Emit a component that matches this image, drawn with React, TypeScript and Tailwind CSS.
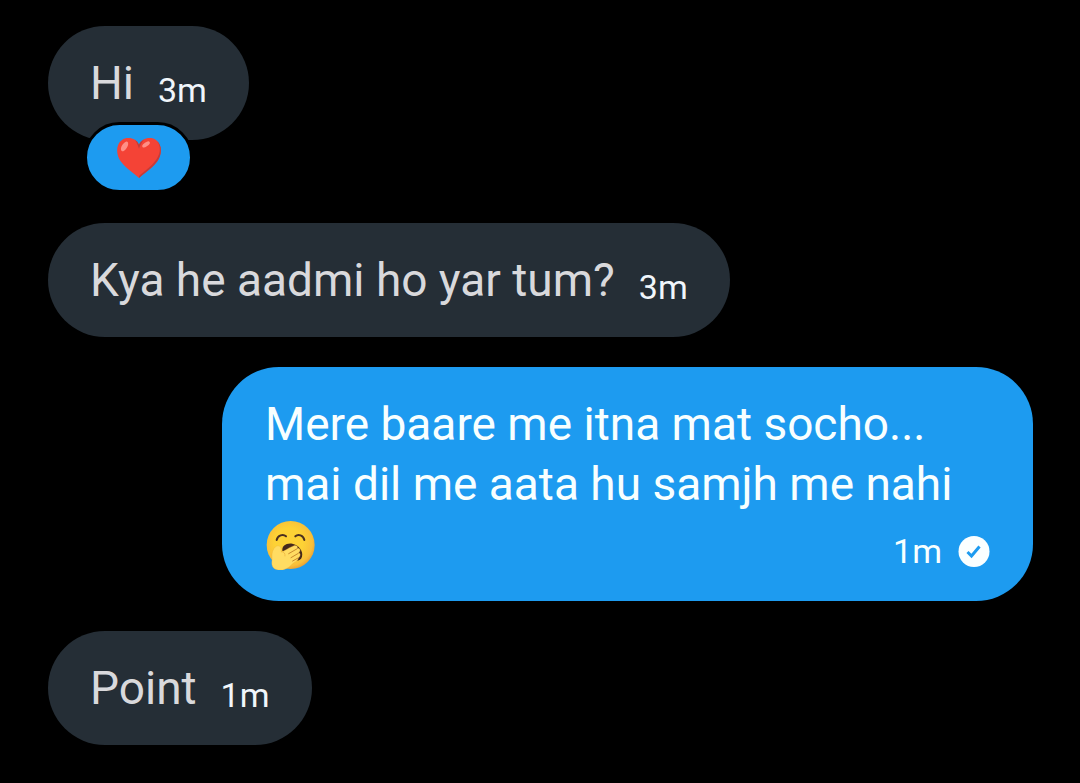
import React from "react";

interface Message {
  id: number;
  text: string;
  time: string;
  mine?: boolean;
  liked?: boolean;
}

const messages: Message[] = [
  { id: 1, text: "Hi", time: "3m", liked: true },
  { id: 2, text: "Kya he aadmi ho yar tum?", time: "3m" },
  {
    id: 3,
    text: "Mere baare me itna mat socho...\nmai dil me aata hu samjh me nahi",
    time: "1m",
    mine: true,
  },
  { id: 4, text: "Point", time: "1m" },
];

const HeartIcon = () => (
  <svg viewBox="50 38 130 119" className="h-[40px] w-[44px]" aria-hidden="true">
    <path
      d="M115 157C103 145 78 131 61 108C50 93 47 73 53 59C58 46 69 38 83 38C98 38 110 45 115 58C120 45 132 38 147 38C161 38 172 46 177 59C183 73 180 93 169 108C152 131 127 145 115 157Z"
      fill="#f44336"
    />
    <path
      d="M169 49C181 62 179 84 167 101C153 122 130 137 115 151L115 157C127 145 152 131 169 108C180 93 183 73 177 59C175 54 172 51 169 49Z"
      fill="#c33c3a"
    />
    <path d="M115 58C112 51 108 46 103 43C109 51 112 61 115 70C118 60 123 51 130 43C123 46 118 51 115 58Z" fill="#c33c3a" />
    <ellipse cx="72" cy="63" rx="8" ry="16" transform="rotate(32 72 63)" fill="#ff8f86" />
    <ellipse cx="136" cy="57" rx="6" ry="13" transform="rotate(55 136 57)" fill="#ff8f86" />
  </svg>
);

const YawnIcon = () => (
  <svg viewBox="34 27 150 153" className="h-[51px] w-[50px]" aria-hidden="true">
    <defs>
      <radialGradient id="face" cx="46%" cy="44%" r="58%">
        <stop offset="0.5" stopColor="#fdd235" />
        <stop offset="0.85" stopColor="#f8bf3a" />
        <stop offset="1" stopColor="#e89e33" />
      </radialGradient>
    </defs>
    <circle cx="111" cy="105" r="72" fill="url(#face)" />
    <path d="M69 90C72 76 88 71 97 79" fill="none" stroke="#4b2f20" strokeWidth="6" strokeLinecap="round" />
    <path d="M125 79C134 71 149 76 152 90" fill="none" stroke="#4b2f20" strokeWidth="6" strokeLinecap="round" />
    <path d="M86 122C84 108 98 98 116 101C136 105 149 123 145 140C142 151 130 154 119 150Z" fill="#45291c" />
    {/* hand over the mouth */}
    <path
      d="M55 143C54 130 57 117 66 110C72 105 81 108 82 115L83 125C90 124 98 119 106 114L121 107C129 105 134 110 130 116L134 115C141 117 140 124 135 129L138 130C141 134 139 140 134 144C134 151 127 155 119 159C111 168 103 175 90 179C77 183 62 179 57 170C52 161 56 153 55 143Z"
      fill="#ffdc62"
      stroke="#edb03a"
      strokeWidth="1"
    />
    <path d="M129 117L105 131M134 130L112 143M133 144L117 153" fill="none" stroke="#c98a2c" strokeWidth="3" strokeLinecap="round" />
    <path d="M83 125C91 125 95 130 94 138" fill="none" stroke="#edb03a" strokeWidth="2" strokeLinecap="round" />
  </svg>
);

const SentIcon = () => (
  <svg viewBox="0 0 32 32" className="size-8" role="img" aria-label="Sent">
    <circle cx="16" cy="16.5" r="15.5" fill="#fbffff" />
    <path d="M9.5 17L13.5 21L21.5 11.5" fill="none" stroke="#1d9bf0" strokeWidth="3" />
  </svg>
);

const Bubble = ({ message }: { message: Message }) => {
  if (message.mine) {
    return (
      <div className="w-full max-w-[811px] self-end rounded-[57px] bg-[#1d9bf0] px-[43px] py-[27px] text-[#f8ffff]">
        <p className="whitespace-pre-line">{message.text}</p>
        <div className="flex h-[60px] items-center justify-between">
          <YawnIcon />
          <div className="flex items-center gap-4 pt-[14px]">
            <span className="text-[34px] leading-9">{message.time}</span>
            <SentIcon />
          </div>
        </div>
      </div>
    );
  }

  return (
    <div className="flex flex-col items-start">
      <div className="flex items-center gap-6 rounded-[57px] bg-[#252e36] px-[42px] py-[27px]">
        <p className="text-[#d9d9dc]">{message.text}</p>
        <span className="pt-[14px] text-[34px] leading-9 text-[#f1f6fb]">{message.time}</span>
      </div>
      {message.liked && (
        <button
          aria-label="Liked"
          className="-mt-[18px] ml-9 flex h-[71px] w-[109px] items-center justify-center rounded-full border-3 border-black bg-[#1d9bf0]"
        >
          <HeartIcon />
        </button>
      )}
    </div>
  );
};

const App = () => {
  return (
    <main className="flex min-h-screen flex-col gap-[30px] bg-black py-[26px] pr-[47px] pl-12 font-['Roboto',sans-serif] text-[46px] leading-[60px]">
      {messages.map((message) => (
        <Bubble key={message.id} message={message} />
      ))}
    </main>
  );
};

export default App;
